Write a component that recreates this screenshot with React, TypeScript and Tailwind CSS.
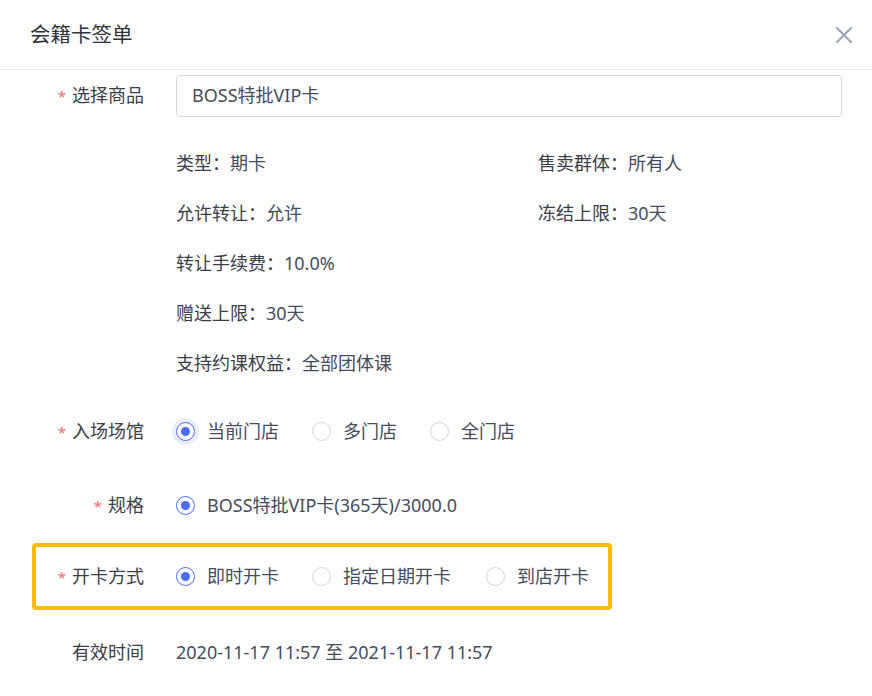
const FONT = { fontFamily: '"Noto Sans", "Noto Sans CJK SC", sans-serif' };

function Radio({ label, checked, halo }: { label: string; checked?: boolean; halo?: boolean }) {
  return (
    <div className="flex items-center gap-[12px]">
      <span
        className={
          "relative flex h-[19px] w-[19px] items-center justify-center rounded-full border bg-white " +
          (checked ? "border-[#4a6cf0]" : "border-[#cfd6df]") +
          (halo ? " shadow-[0_0_0_4px_#e9eefc]" : "")
        }
      >
        {checked && <span className="h-[9px] w-[9px] rounded-full bg-[#4a6cf0]" />}
      </span>
      <span className="text-[#444d5c]">{label}</span>
    </div>
  );
}

function Label({ text, required }: { text: string; required?: boolean }) {
  return (
    <span className="text-[#3a4049]">
      {required && <span className="mr-[6px] text-[15px] text-[#f56c6c]">*</span>}
      {text}
    </span>
  );
}

function Info({ k, v }: { k: string; v: string }) {
  return (
    <div className="flex h-[50px] items-center">
      <span className="text-[#3a4049]">{k}：</span>
      <span className="text-[#444d5c]">{v}</span>
    </div>
  );
}

export default function App() {
  return (
    <div className="h-[696px] w-[872px] overflow-hidden bg-white text-[18px]" style={FONT}>
      <div className="flex h-[70px] items-center justify-between border-b border-[#e6e8eb] pl-[30px] pr-[18px]">
        <span className="text-[20.5px] text-[#2f343b]">会籍卡签单</span>
        <svg width="20" height="20" viewBox="0 0 20 20" className="mt-[1px]">
          <path d="M3 3 L17 17 M17 3 L3 17" stroke="#9aa9b8" strokeWidth="2.2" strokeLinecap="round" />
        </svg>
      </div>

      <div className="flex h-[47px] items-center pr-[30px] pt-[4px]">
        <div className="w-[144px] text-right">
          <Label text="选择商品" required />
        </div>
        <div className="ml-[32px] flex h-[42px] flex-1 items-center rounded-[4px] border border-[#d3d8df] px-[15px] text-[#444d5c]">
          BOSS特批VIP卡
        </div>
      </div>

      <div className="mt-[21px] grid w-[720px] grid-cols-[362px_1fr] pl-[176px]">
        <Info k="类型" v="期卡" />
        <Info k="售卖群体" v="所有人" />
        <Info k="允许转让" v="允许" />
        <Info k="冻结上限" v="30天" />
        <Info k="转让手续费" v="10.0%" />
        <div />
        <Info k="赠送上限" v="30天" />
        <div />
        <Info k="支持约课权益" v="全部团体课" />
      </div>

      <div className="mt-[18px] flex h-[50px] items-center">
        <div className="w-[144px] text-right">
          <Label text="入场场馆" required />
        </div>
        <div className="ml-[32px] flex items-center">
          <div className="w-[136px]">
            <Radio label="当前门店" checked halo />
          </div>
          <div className="w-[118px]">
            <Radio label="多门店" />
          </div>
          <Radio label="全门店" />
        </div>
      </div>

      <div className="mt-[24px] flex h-[50px] items-center">
        <div className="w-[144px] text-right">
          <Label text="规格" required />
        </div>
        <div className="ml-[32px]">
          <Radio label="BOSS特批VIP卡(365天)/3000.0" checked />
        </div>
      </div>

      <div className="ml-[32px] mt-[13px] flex h-[67px] w-[580px] items-center rounded-[4px] border-[4px] border-[#fbbb0a]">
        <div className="w-[108px] text-right">
          <Label text="开卡方式" required />
        </div>
        <div className="ml-[32px] flex items-center">
          <div className="w-[136px]">
            <Radio label="即时开卡" checked />
          </div>
          <div className="w-[174px]">
            <Radio label="指定日期开卡" />
          </div>
          <Radio label="到店开卡" />
        </div>
      </div>

      <div className="mt-[17px] flex h-[50px] items-center">
        <div className="w-[144px] text-right">
          <Label text="有效时间" />
        </div>
        <div className="ml-[32px] text-[#444d5c]">2020-11-17 11:57 至 2021-11-17 11:57</div>
      </div>
    </div>
  );
}
